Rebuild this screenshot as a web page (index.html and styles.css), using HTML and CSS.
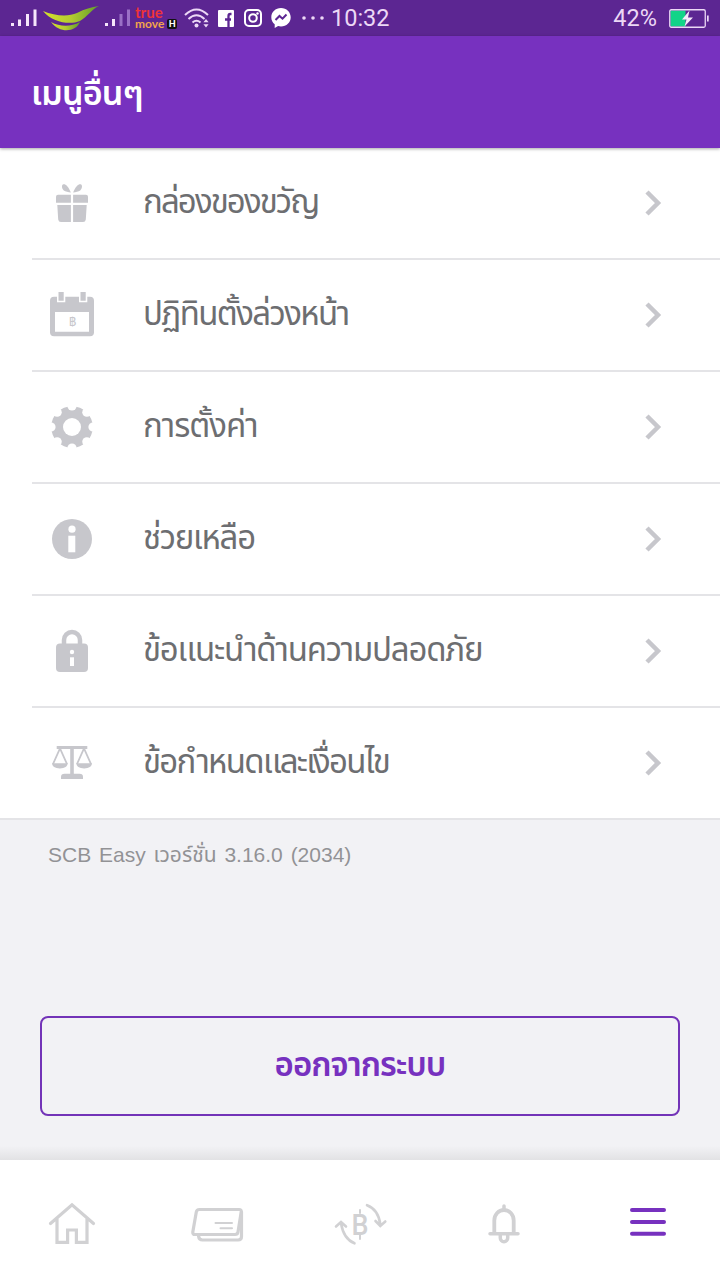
FILE: index.html
```html
<!DOCTYPE html>
<html lang="th">

<head>
    <meta charset="UTF-8">
    <meta name="viewport" content="width=device-width, initial-scale=1.0">
    <title>SCB Easy</title>
    <link rel="stylesheet" href="styles.css">
</head>

<body>
    <div class="status-bar">
        <svg class="signal" width="26" height="20" viewBox="0 0 26 20">
            <path d="M0 15h3v3H0zM7 11.500h3V18H7zM15 6h3v12h-3zM22.500 1.500h3V18h-3z" />
        </svg>
        <svg class="carrier" width="56" height="26" viewBox="0 0 56 26">
            <defs>
                <linearGradient id="leaf">
                    <stop offset="0" stop-color="#d6e02c" />
                    <stop offset="0.5" stop-color="#b4cc30" />
                    <stop offset="1" stop-color="#5f9c2c" />
                </linearGradient>
            </defs>
            <path fill="url(#leaf)" d="M0 6C12 11 25 12 34 8C42 4 48 2 56 1C49 4 44 12 37 16C27 20 10 18 0 6z" />
            <path fill="url(#leaf)" d="M8 17C17 22 28 22 37 17C33 27 17 29 8 17z" />
        </svg>
        <svg class="signal second" width="26" height="20" viewBox="0 0 26 20">
            <path d="M0 15h3v3H0zM7 11h3v7H7z" />
            <path class="dim" d="M14.500 6h3v12h-3zM22 1.500h3V18h-3z" />
        </svg>
        <div class="truemove">
            <span class="true">true</span>
            <span class="move">move<b>H</b></span>
        </div>
        <svg class="wifi" width="26" height="22" viewBox="0 0 26 22">
            <path d="M1 8Q12.500-3 24 8M4.500 12Q12.500 4.500 20.500 12M8.500 15.500Q12.500 12 16.500 15.500" />
            <circle cx="12.500" cy="18.500" r="2" />
            <path class="arrows" d="M22 12l2.600 3.300h-5.200zM22 20.500l2.600-3.300h-5.200z" />
        </svg>
        <svg class="facebook" width="16" height="17" viewBox="0 0 16 17">
            <rect width="16" height="17" rx="1" fill="#fff" />
            <path d="M13.500 4h-1.200c-1.300 0-1.800.7-1.800 1.900V17M7 9.500h6" fill="none" stroke="#5c2692" stroke-width="2.300" />
        </svg>
        <svg class="instagram" width="18" height="18" viewBox="0 0 18 18">
            <rect x="1" y="1" width="16" height="16" rx="4" />
            <circle cx="9" cy="9" r="3.800" />
            <circle class="lens" cx="13.500" cy="4.500" r="1.200" />
        </svg>
        <svg class="messenger" width="20" height="20" viewBox="0 0 20 20">
            <path fill="#fff" d="M10 0C4.500 0 .3 4 .3 9.200c0 3 1.300 5.400 3.400 7.100V20l3.400-1.900c.9.300 1.900.4 2.900.4 5.500 0 9.700-4 9.700-9.200S15.500 0 10 0z" />
            <path fill="none" stroke="#5c2692" stroke-width="2" d="M4.500 12L8.500 8l3 2.700 4-4.200" />
        </svg>
        <svg class="dots" width="22" height="4" viewBox="0 0 22 4">
            <circle cx="2" cy="2" r="1.800" />
            <circle cx="11" cy="2" r="1.800" />
            <circle cx="20" cy="2" r="1.800" />
        </svg>
        <span class="time">10:32</span>
        <span class="percent">42%</span>
        <svg class="battery" width="40" height="19" viewBox="0 0 40 19">
            <rect x="1.500" y="1.500" width="15" height="16" fill="#12d488" />
            <rect x="0.750" y="0.750" width="35.500" height="17.500" rx="1.500" fill="none" stroke="#ecd8f6" stroke-width="1.300" />
            <path d="M38 6.500h1.700v6H38z" fill="#ecd8f6" />
            <path d="M20.500 1.500L13 10.500h4.500L15.500 17.500 24 8.500h-5z" fill="#f5e8fa" />
        </svg>
    </div>

    <header class="header">
        <h1>เมนูอื่นๆ</h1>
    </header>

    <ul class="menu">
        <li>
            <svg class="icon" viewBox="0 0 48 48">
                <path d="M22.900 13.500C20 6.500 17 4.500 14.800 5.500c-1.500 1-.8 4.500 1 6 1.700 1.300 4.500 1.500 7.100 2zM25.100 13.500C28 6.500 31 4.500 33.200 5.500c1.500 1 .8 4.500-1 6-1.700 1.300-4.500 1.500-7.100 2z" />
                <path d="M22.900 15.700v8H8v-6q0-2 2-2zM25.100 15.700v8H40v-6q0-2-2-2z" />
                <path d="M22.900 26v17H13q-2.500 0-2.800-2.500L9.300 26zM25.100 26v17H35q2.500 0 2.800-2.500L38.700 26z" />
            </svg>
            <span class="label gift">กล่องของขวัญ</span>
            <svg class="chevron" viewBox="0 0 18 28"><path d="M3 3l11 11L3 25" /></svg>
        </li>
        <li>
            <svg class="icon" viewBox="0 0 48 48">
                <rect x="2" y="5.700" width="44" height="39.600" rx="4" />
                <path class="hole" d="M7 21h34v19.700H7zM9 4h8.300v7.200H9zM31 4h8.300v7.200H31z" />
                <path d="M10.500 1h5.200v8.700h-5.200zM32.500 1h5.200v8.700h-5.200z" />
                <text x="24" y="35" font-size="12">฿</text>
            </svg>
            <span class="label calendar">ปฏิทินตั้งล่วงหน้า</span>
            <svg class="chevron" viewBox="0 0 18 28"><path d="M3 3l11 11L3 25" /></svg>
        </li>
        <li>
            <svg class="icon" viewBox="0 0 48 48">
                <circle cx="24" cy="24" r="20.800" />
                <g class="hole">
                    <circle cx="24" cy="24" r="9" />
                    <circle cx="24" cy="3" r="4.600" />
                    <circle cx="38.850" cy="9.150" r="4.600" />
                    <circle cx="45" cy="24" r="4.600" />
                    <circle cx="38.850" cy="38.850" r="4.600" />
                    <circle cx="24" cy="45" r="4.600" />
                    <circle cx="9.150" cy="38.850" r="4.600" />
                    <circle cx="3" cy="24" r="4.600" />
                    <circle cx="9.150" cy="9.150" r="4.600" />
                </g>
            </svg>
            <span class="label settings">การตั้งค่า</span>
            <svg class="chevron" viewBox="0 0 18 28"><path d="M3 3l11 11L3 25" /></svg>
        </li>
        <li>
            <svg class="icon" viewBox="0 0 48 48">
                <circle cx="24" cy="24" r="20" />
                <circle class="hole" cx="24" cy="14.200" r="3.600" />
                <path class="hole" d="M20.300 20.700h7v16.600h-7z" />
            </svg>
            <span class="label help">ช่วยเหลือ</span>
            <svg class="chevron" viewBox="0 0 18 28"><path d="M3 3l11 11L3 25" /></svg>
        </li>
        <li>
            <svg class="icon" viewBox="0 0 48 48">
                <rect x="8" y="16.500" width="32" height="28.500" rx="4" />
                <path class="line" stroke-width="4.500" d="M16 18v-5a8 8 0 0 1 16 0v5" />
                <circle class="hole" cx="24" cy="25" r="2.200" />
                <path class="hole" d="M22 30.300h4V39h-4z" />
            </svg>
            <span class="label security">ข้อแนะนำด้านความปลอดภัย</span>
            <svg class="chevron" viewBox="0 0 18 28"><path d="M3 3l11 11L3 25" /></svg>
        </li>
        <li>
            <svg class="icon" viewBox="0 0 48 48">
                <path d="M8.700 7h30.600v3H8.700zM22.200 9h3.600v27h-3.600z" />
                <path d="M13 40v-2q0-3.300 3.500-3.300h15q3.500 0 3.500 3.300v2z" />
                <path d="M4 24.300h15.700c0 3-3 5.200-7.800 5.200S4 27.300 4 24.300zM28.300 24.300H44c0 3-3 5.200-7.800 5.200s-7.900-2.200-7.900-5.200z" />
                <path class="line" stroke-width="1.800" d="M5 25L12 9.500 19 25M29 25L36 9.500 43 25" />
            </svg>
            <span class="label terms">ข้อกำหนดและเงื่อนไข</span>
            <svg class="chevron" viewBox="0 0 18 28"><path d="M3 3l11 11L3 25" /></svg>
        </li>
    </ul>

    <main class="content">
        <p class="version">SCB Easy เวอร์ชั่น 3.16.0 (2034)</p>
        <button class="logout" type="button">ออกจากระบบ</button>
    </main>

    <nav class="tab-bar">
        <a class="tab">
            <svg viewBox="0 0 60 60">
                <path d="M8.500 33.500L30 14.800l21.500 18.700M15 29v23.300h10.600V40h8.800v12.300H45V29" />
            </svg>
        </a>
        <a class="tab">
            <svg viewBox="0 0 60 60">
                <path d="M13.500 19.500H53q2.500 0 2.200 2.500L52 42q-.4 2.500-3 2.500H9q-2.500 0-2.200-2.500l3.500-20q.4-2.500 3.200-2.500z" />
                <path d="M12.500 46q.5 4 4 4H52q3.500 0 3.500-3.500V22" />
                <path stroke-width="2" d="M29.500 33H46M34.500 38.300H46" />
            </svg>
        </a>
        <a class="tab">
            <svg viewBox="0 0 60 60">
                <text x="30" y="44.800" font-size="30" font-weight="500" textLength="17" lengthAdjust="spacingAndGlyphs">B</text>
                <path stroke-width="2" d="M30 20v3M30 45v4" />
                <path stroke-width="2.600" d="M37 15.200Q48.500 19.500 50.300 34.500M45.500 31l4.800 5 5-4.500M24.500 53.300Q13.500 49 11 33M6 36.500l5-4.500 5 4.500" />
            </svg>
        </a>
        <a class="tab">
            <svg viewBox="0 0 60 60">
                <path stroke-width="3.800" d="M20.300 43V30.500a9.700 10.500 0 0 1 19.400 0V43" />
                <path stroke-width="3.500" d="M16 43.800h28M30 16v3" />
                <path stroke-width="3.500" d="M26.300 45v3a3.700 3.700 0 0 0 7.400 0v-3" />
            </svg>
        </a>
        <a class="tab active">
            <svg viewBox="0 0 60 60">
                <path d="M14 20h32M14 32h32M14 43.800h32" />
            </svg>
        </a>
    </nav>
</body>

</html>
```
FILE: styles.css
```css
* {
    box-sizing: border-box;
}

body {
    display: flex;
    flex-direction: column;
    height: 1280px;
    margin: 0;
    font-family: "Noto Sans Thai", "Liberation Sans", sans-serif;
    background-color: #f2f2f5;
}

svg {
    display: block;
    flex: none;
}

/* status bar */
.status-bar {
    display: flex;
    align-items: center;
    height: 36px;
    padding: 0 11px;
    color: #ecd8f6;
    font-family: Roboto, sans-serif;
    background-color: #5c2692;
}

.signal {
    fill: #f6e6fb;
}

.signal .dim {
    fill: #9a70c6;
}

.carrier {
    margin: 0 6px;
}

.truemove {
    display: flex;
    flex-direction: column;
    width: 44px;
    margin-left: 4px;
    font-family: Lato, sans-serif;
    font-weight: 700;
}

.true {
    color: #ee3338;
    font-size: 15px;
    line-height: 12px;
}

.move {
    display: flex;
    align-items: center;
    gap: 3px;
    color: #f3a44b;
    font-size: 12px;
    line-height: 12px;
}

.move b {
    width: 10px;
    height: 10px;
    border-radius: 2px;
    color: #fff;
    font-size: 9px;
    line-height: 10px;
    text-align: center;
    background-color: #111;
}

.wifi {
    margin-left: 5px;
    fill: none;
    stroke: #ecd8f6;
    stroke-width: 2;
}

.wifi circle,
.wifi .arrows {
    fill: #ecd8f6;
    stroke: none;
}

.facebook {
    margin-left: 8px;
}

.instagram {
    margin-left: 10px;
    fill: none;
    stroke: #fff;
    stroke-width: 2;
}

.instagram .lens {
    fill: #fff;
    stroke: none;
}

.messenger {
    margin-left: 9px;
}

.dots {
    margin-left: 11px;
    fill: #ecd8f6;
}

.time,
.percent {
    font-size: 23.500px;
    line-height: 36px;
}

.time {
    margin-left: 7px;
}

.percent {
    margin-left: auto;
    margin-right: 12px;
}

/* header */
.header {
    display: flex;
    align-items: center;
    height: 112px;
    padding: 5px 31px 0;
    color: #fff;
    background-color: #7731bf;
    box-shadow: 0 1px 3px rgba(0, 0, 0, 0.35);
    z-index: 1;
}

.header h1 {
    margin: 0;
    font-size: 34px;
    font-weight: 600;
    letter-spacing: -0.800px;
}

/* menu list */
.menu {
    margin: 0;
    padding: 0 0 0 32px;
    border-bottom: 2px solid #e4e4e7;
    list-style: none;
    background-color: #fff;
}

.menu li {
    display: flex;
    align-items: center;
    height: 112px;
    padding: 0 58px 0 16px;
    border-bottom: 2px solid #e4e4e7;
}

.menu li:last-child {
    height: 110px;
    border-bottom: none;
}

.icon {
    width: 48px;
    height: 48px;
    fill: #c7c7cc;
}

.icon .hole {
    fill: #fff;
}

.icon .line {
    fill: none;
    stroke: #c7c7cc;
}

.icon text,
.tab text {
    font-family: Roboto, sans-serif;
    text-anchor: middle;
}

.label {
    flex: 1;
    margin-left: 47px;
    color: #6d6e71;
    font-size: 33px;
    line-height: 48px;
    white-space: nowrap;
}

.gift {
    letter-spacing: -1.900px;
}

.calendar {
    letter-spacing: -1.600px;
}

.settings {
    letter-spacing: -1px;
}

.help {
    letter-spacing: -1.300px;
}

.security {
    letter-spacing: -1.200px;
}

.terms {
    letter-spacing: -1.700px;
}

.chevron {
    width: 18px;
    height: 28px;
    fill: none;
    stroke: #c7c7cc;
    stroke-width: 4.500;
}

/* version and logout */
.content {
    display: flex;
    flex: 1;
    flex-direction: column;
    justify-content: space-between;
    padding: 20px 40px 44px;
    background: linear-gradient(to top, #e2e2e4, #f2f2f5 14px);
}

.version {
    margin: 0 8px;
    color: #929295;
    font-family: "Liberation Sans", "Noto Sans Thai", sans-serif;
    font-size: 21px;
    line-height: 30px;
    word-spacing: 2px;
}

.logout {
    height: 100px;
    padding: 0;
    border: 2px solid #7334b8;
    border-radius: 8px;
    color: #7731bf;
    font-family: inherit;
    font-size: 33px;
    font-weight: 600;
    letter-spacing: -1px;
    background-color: transparent;
}

/* bottom tabs */
.tab-bar {
    display: flex;
    height: 120px;
    background-color: #fff;
}

.tab {
    display: flex;
    flex: 1;
    align-items: center;
    justify-content: center;
}

.tab svg {
    width: 60px;
    height: 60px;
    fill: none;
    stroke: #d1d1d3;
    stroke-width: 3.200;
    stroke-linecap: round;
}

.tab text {
    fill: #d1d1d3;
    stroke: none;
}

.tab.active svg {
    stroke: #7731bf;
    stroke-width: 4;
}
```
